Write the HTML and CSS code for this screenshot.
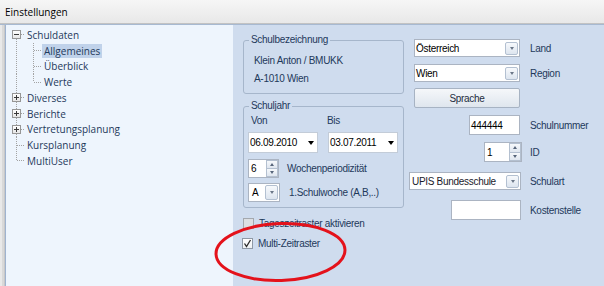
FILE: index.html
```html
<!DOCTYPE html>
<html lang="de">
<head>
<meta charset="utf-8">
<title>Einstellungen</title>
<link rel="stylesheet" href="styles.css">
</head>
<body>
<div class="window">
  <div class="titlebar">Einstellungen</div>
  <div class="main">
    <div class="tree">
      <div class="row"><span class="cell c0 first"><span class="box"></span></span><span class="label">Schuldaten</span></div>
      <div class="row"><span class="cell c0 pass"></span><span class="cell c1 tee"></span><span class="label sel">Allgemeines</span></div>
      <div class="row"><span class="cell c0 pass"></span><span class="cell c1 tee"></span><span class="label">Überblick</span></div>
      <div class="row"><span class="cell c0 pass"></span><span class="cell c1 ell"></span><span class="label">Werte</span></div>
      <div class="row"><span class="cell c0 tee"><span class="box plus"></span></span><span class="label">Diverses</span></div>
      <div class="row"><span class="cell c0 tee"><span class="box plus"></span></span><span class="label">Berichte</span></div>
      <div class="row"><span class="cell c0 tee"><span class="box plus"></span></span><span class="label">Vertretungsplanung</span></div>
      <div class="row"><span class="cell c0 tee"></span><span class="label">Kursplanung</span></div>
      <div class="row"><span class="cell c0 ell"></span><span class="label">MultiUser</span></div>
    </div>
    <div class="panel">
      <div class="col-left">
        <fieldset class="group">
          <legend>Schulbezeichnung</legend>
          <div class="name-lines">
            <div>Klein Anton / BMUKK</div>
            <div>A-1010 Wien</div>
          </div>
        </fieldset>
        <fieldset class="group group-year">
          <legend>Schuljahr</legend>
          <div class="year">
            <div class="dates">
              <span class="dlbl von">Von</span><span class="dlbl bis">Bis</span>
              <div class="date"><span>06.09.2010</span><span class="tri"></span></div>
              <div class="date"><span>03.07.2011</span><span class="tri"></span></div>
            </div>
            <div class="line line-spin">
              <div class="spin spin-week"><span class="val">6</span><span class="spinbtns"><span class="sb up"></span><span class="sb down"></span></span></div>
              <span class="llbl">Wochenperiodizität</span>
            </div>
            <div class="line line-combo">
              <div class="combo combo-a"><span class="val">A</span><span class="ddbtn"></span></div>
              <span class="llbl">1.Schulwoche (A,B,..)</span>
            </div>
          </div>
        </fieldset>
        <div class="checks">
          <div class="chk"><span class="cb off"></span><span>Tageszeitraster aktivieren</span></div>
          <div class="chk chk2"><span class="cb on"><svg width="9" height="9" viewBox="0 0 9 9"><polyline points="1.5,4.5 3.5,7.5 7.5,1" fill="none" stroke="#2b2b2b" stroke-width="1.3"/></svg></span><span>Multi-Zeitraster</span></div>
        </div>
      </div>
      <div class="col-right">
        <div class="rrow r-land"><div class="ctl"><div class="combo combo-wide"><span class="val dark">Österreich</span><span class="ddbtn"></span></div></div><span class="rlbl">Land</span></div>
        <div class="rrow r-region"><div class="ctl"><div class="combo combo-wide"><span class="val dark">Wien</span><span class="ddbtn"></span></div></div><span class="rlbl">Region</span></div>
        <div class="rrow r-btn"><div class="ctl"><div class="button">Sprache</div></div></div>
        <div class="rrow r-nr"><div class="ctl"><div class="textbox tb-nr">444444</div></div><span class="rlbl">Schulnummer</span></div>
        <div class="rrow r-id"><div class="ctl"><div class="spin spin-id"><span class="val dark">1</span><span class="spinbtns"><span class="sb up"></span><span class="sb down"></span></span></div></div><span class="rlbl">ID</span></div>
        <div class="rrow r-art"><div class="ctl"><div class="combo combo-full"><span class="val dark">UPIS Bundesschule</span><span class="ddbtn"></span></div></div><span class="rlbl">Schulart</span></div>
        <div class="rrow r-kst"><div class="ctl"><div class="textbox tb-kst"></div></div><span class="rlbl">Kostenstelle</span></div>
      </div>
    </div>
  </div>
  <svg class="mark" width="604" height="286" viewBox="0 0 604 286">
    <ellipse cx="280.5" cy="252" rx="64.5" ry="28.5" transform="rotate(-2 280.5 252)" fill="none" stroke="#e4121b" stroke-width="3"/>
  </svg>
</div>
</body>
</html>
```

FILE: styles.css
```css
* { box-sizing: border-box; }
html, body { margin: 0; padding: 0; }
body {
  width: 604px;
  height: 286px;
  overflow: hidden;
  background: #e4e4e4;
  font-family: "Liberation Sans", Arial, sans-serif;
}
.window {
  position: relative;
  width: 604px;
  height: 286px;
  display: flex;
  flex-direction: column;
  --dv: repeating-linear-gradient(to bottom, #a3a3a3 0 1px, transparent 1px 2px);
  --dh: repeating-linear-gradient(to right, #a3a3a3 0 1px, transparent 1px 2px);
}
.titlebar {
  height: 24px;
  flex: none;
  padding-left: 5px;
  display: flex;
  align-items: center;
  font-family: "Open Sans", "Noto Sans", sans-serif;
  font-size: 10px;
  color: #000;
  background: linear-gradient(#f6f6f6, #e8e8e8);
  border-bottom: 1px solid #c2c2c2;
}
.main {
  flex: 1;
  display: flex;
  border-top: 1px solid #a7b9d1;
  padding-left: 5px;
  background: linear-gradient(to right, #e9e9e9 0 2px, #d9d9d9 2px 4px, #c8c8c8 4px 5px);
}

/* tree */
.tree {
  width: 228px;
  flex: none;
  background: #eef5fd;
  border-left: 1px solid #9fb3cf;
  padding-top: 2px;
  font-family: "Open Sans", "Noto Sans", sans-serif;
  font-size: 10px;
  color: #1e395b;
}
.row {
  height: 15.75px;
  display: flex;
  align-items: center;
}
.cell {
  flex: none;
  align-self: stretch;
  display: flex;
  align-items: center;
}
.c0 { width: 19px; }
.c1 { width: 17px; }
.c0.pass { background: var(--dv) 10px 0 / 1px 100% no-repeat; }
.c0.first {
  background: var(--dv) 10px 100% / 1px 50% no-repeat, var(--dh) 15px 50% / 4px 1px no-repeat;
}
.c0.tee {
  background: var(--dv) 10px 0 / 1px 100% no-repeat, var(--dh) 11px 50% / 8px 1px no-repeat;
}
.c0.ell {
  background: var(--dv) 10px 0 / 1px 50% no-repeat, var(--dh) 11px 50% / 8px 1px no-repeat;
}
.c1.tee {
  background: var(--dv) 8px 0 / 1px 100% no-repeat, var(--dh) 9px 50% / 8px 1px no-repeat;
}
.c1.ell {
  background: var(--dv) 8px 0 / 1px 50% no-repeat, var(--dh) 9px 50% / 8px 1px no-repeat;
}
.box {
  position: relative;
  width: 9px;
  height: 9px;
  margin-left: 6px;
  border: 1px solid #969696;
  background: linear-gradient(#ffffff, #e6e6e6);
}
.box::before {
  content: "";
  position: absolute;
  left: 1px;
  top: 3px;
  width: 5px;
  height: 1px;
  background: #3a3a3a;
}
.box.plus::after {
  content: "";
  position: absolute;
  left: 3px;
  top: 1px;
  width: 1px;
  height: 5px;
  background: #3a3a3a;
}
.label {
  padding: 0 2px;
  height: 14px;
  line-height: 14px;
  white-space: nowrap;
}
.label.sel { background: #c0d2ea; }

/* right panel */
.panel {
  flex: 1;
  display: flex;
  align-items: flex-start;
  background: #cfdcee;
  padding: 9px 0 0 10px;
  color: #1e395b;
  font-size: 10px;
  letter-spacing: -0.3px;
}
.col-left {
  width: 161px;
  flex: none;
  display: flex;
  flex-direction: column;
}
.group {
  margin: 0;
  padding: 0;
  min-width: 0;
  border: 1px solid #a6b6cb;
  border-radius: 3px;
}
.group legend {
  margin-left: 5px;
  padding: 0 2px;
  line-height: 12px;
  font-size: 10px;
}
.name-lines {
  padding: 6px 0 5px 10px;
  line-height: 18px;
}
.group-year { margin-top: 6px; }
.year { padding: 2px 4px 5px 4px; }
.dates {
  display: grid;
  grid-template-columns: 70px 70px;
  column-gap: 10px;
  row-gap: 4px;
}
.dlbl { line-height: 14px; }
.dlbl.von { padding-left: 3px; }
.dlbl.bis { margin-left: -1px; }
.date {
  height: 21px;
  background: #fff;
  border: 1px solid #c3ccd8;
  display: flex;
  align-items: center;
  justify-content: space-between;
  padding: 0 3px 0 1px;
  color: #000;
}
.tri {
  width: 0;
  height: 0;
  border-left: 3px solid transparent;
  border-right: 3px solid transparent;
  border-top: 4px solid #000;
}
.line {
  display: flex;
  align-items: center;
}
.line-spin { margin-top: 6px; }
.line-combo { margin-top: 5px; }
.llbl { margin-left: 8px; }
.line-combo .llbl { margin-left: 9px; }

.spin {
  height: 19px;
  background: #fff;
  border: 1px solid #abb4c2;
  display: flex;
  align-items: stretch;
  justify-content: space-between;
  color: #000;
}
.spin .val { padding-left: 2px; align-self: center; }
.spin-week { width: 31px; }
.spin-id { width: 38px; height: 20px; }
.spinbtns {
  width: 12px;
  display: flex;
  flex-direction: column;
}
.sb {
  flex: 1;
  display: flex;
  align-items: center;
  justify-content: center;
  border: 1px solid #b4c0d0;
  background: linear-gradient(#f6f8fb, #dfe6ef);
}
.sb.up { border-bottom: none; }
.sb.up::before {
  content: "";
  border-left: 2.5px solid transparent;
  border-right: 2.5px solid transparent;
  border-bottom: 3px solid #57657a;
}
.sb.down::before {
  content: "";
  border-left: 2.5px solid transparent;
  border-right: 2.5px solid transparent;
  border-top: 3px solid #57657a;
}

.combo {
  height: 18px;
  background: #fff;
  border: 1px solid #abb4c2;
  display: flex;
  align-items: center;
  justify-content: space-between;
  color: #000;
}
.combo .val { padding-left: 1px; }
.combo-a { width: 32px; height: 19px; }
.combo-a .val { padding-left: 3px; }
.combo-wide { width: 106px; margin-right: 1px; }
.combo-full { width: 112px; }
.combo-full .val { padding-left: 2px; color: #1a1a2a; }
.ddbtn {
  width: 13px;
  height: 13px;
  margin-right: 1px;
  border: 1px solid #b3c0d1;
  border-radius: 2px;
  background: linear-gradient(#f7f9fc, #dde5ef);
  display: flex;
  align-items: center;
  justify-content: center;
}
.ddbtn::before {
  content: "";
  border-left: 2.5px solid transparent;
  border-right: 2.5px solid transparent;
  border-top: 3px solid #6b7788;
}
.combo-a .ddbtn { margin-right: 1px; height: 15px; }

.checks { margin-top: 10px; }
.chk {
  display: flex;
  align-items: center;
  height: 11px;
}
.chk .cb { margin-right: 5px; }
.chk2 { margin-top: 9px; margin-left: -1px; }
.cb {
  width: 11px;
  height: 11px;
  border: 1px solid #8f99a6;
  display: flex;
  align-items: center;
  justify-content: center;
}
.cb.off { background: #dcdfe3; border-color: #a4a8ae; }
.cb.on { background: linear-gradient(#ffffff, #eef1f4); }

.col-right {
  margin-left: 5px;
  margin-top: 5px;
  display: flex;
  flex-direction: column;
}
.rrow {
  display: flex;
  align-items: center;
}
.ctl {
  width: 112px;
  display: flex;
  justify-content: flex-end;
}
.rlbl { margin-left: 9px; padding-top: 1px; }
.r-region { margin-top: 7px; }
.r-btn { margin-top: 6px; }
.r-nr { margin-top: 7px; }
.r-id { margin-top: 7px; }
.r-art { margin-top: 10px; }
.r-kst { margin-top: 10px; }
.button {
  width: 106px;
  height: 20px;
  margin-right: 1px;
  border: 1px solid #a7b3c3;
  border-radius: 2px;
  background: linear-gradient(#f5f7fa, #dfe6ee);
  display: flex;
  align-items: center;
  justify-content: center;
  color: #1e2d40;
}
.textbox {
  height: 20px;
  background: #fff;
  border: 1px solid #abb4c2;
  display: flex;
  align-items: center;
  padding-left: 1px;
  color: #000;
}
.tb-nr { width: 51px; margin-right: 1px; }
.tb-kst { width: 70px; }
.spin-id { margin-right: -1px; }
.spin-id .val { padding-left: 2px; }

.mark {
  position: absolute;
  left: 0;
  top: 0;
  pointer-events: none;
}
```
